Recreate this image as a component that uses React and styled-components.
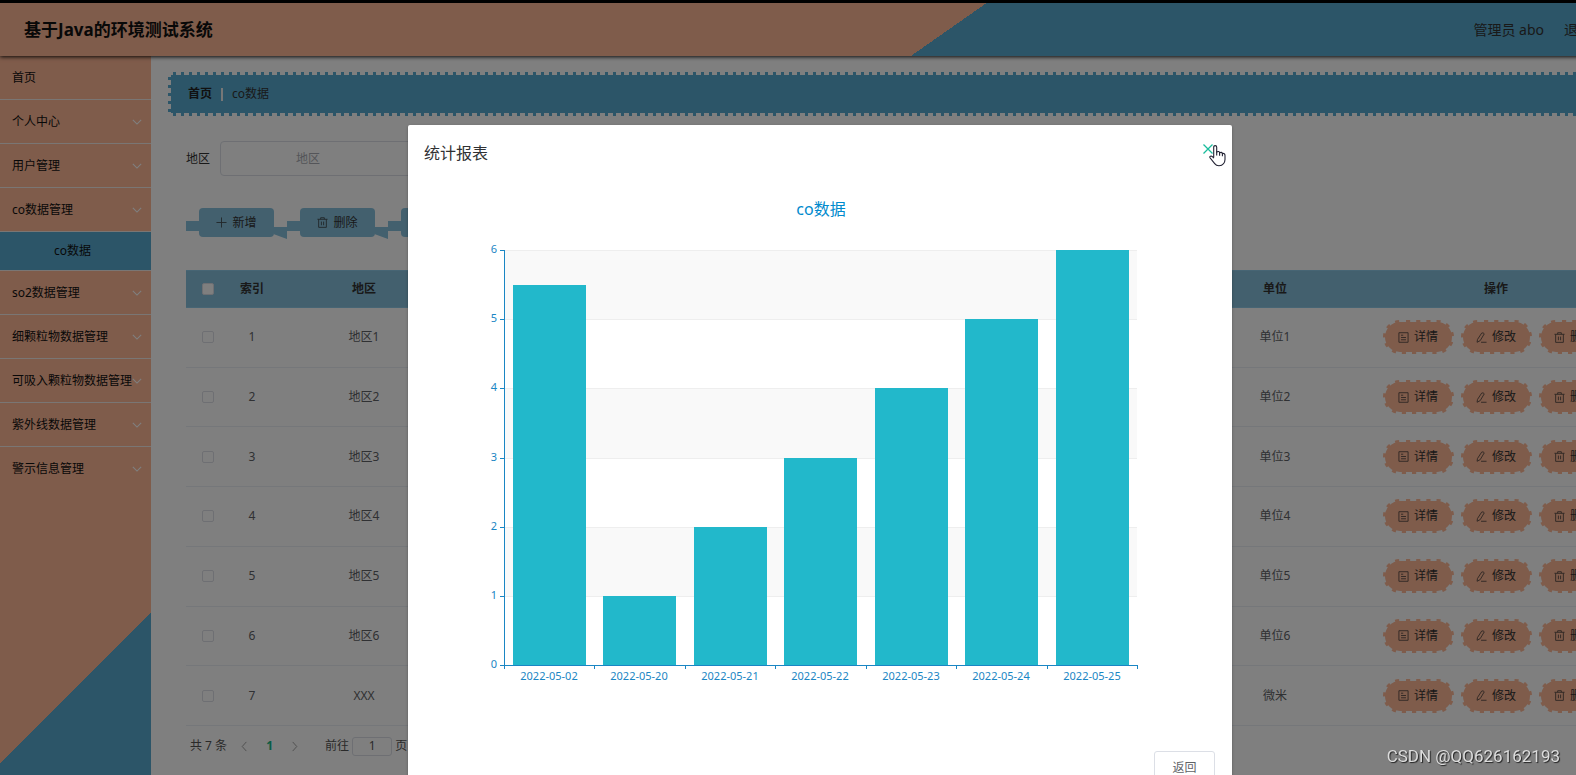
import React from "react";
import styled, { createGlobalStyle } from "styled-components";

const Global = createGlobalStyle`
  *, *::before, *::after { box-sizing: border-box; }
  html, body { margin: 0; padding: 0; }
  body {
    background: #fff;
    color: #333;
    font-family: "Noto Sans", "Noto Sans CJK SC", sans-serif;
    font-size: 12px;
    line-height: 20px;
    overflow: hidden;
  }
  button, input { font: inherit; color: inherit; }
`;

const SALMON = "#ffb896";
const BLUE = "#58aad0";
const PALE_BLUE = "#86c0dc";

const Shell = styled.div`
  position: relative;
  display: flex;
  flex-direction: column;
  width: calc(100% + 64px);
  height: 100vh;
  overflow: hidden;
  border-top: 3px solid #000;
`;

const Header = styled.header`
  position: relative;
  z-index: 1;
  flex: none;
  display: flex;
  align-items: center;
  justify-content: space-between;
  height: 53px;
  padding: 0 20px 0 24px;
  background: linear-gradient(145deg, ${SALMON} 57.5%, ${BLUE} 57.5%);
  box-shadow: 0 1px 4px rgba(0, 0, 0, 0.9);
`;

const SystemName = styled.h1`
  margin: 0;
  color: #111;
  font-size: 17px;
  font-weight: 700;
  line-height: 24px;
`;

const UserArea = styled.div`
  display: flex;
  gap: 20px;
  font-size: 14px;
`;

const HeaderLink = styled.a`
  color: inherit;
  text-decoration: none;
`;

const Body = styled.div`
  flex: 1;
  display: flex;
  min-height: 0;
`;

const Sidebar = styled.nav`
  flex: none;
  width: 151px;
  background: linear-gradient(-45deg, ${BLUE} 115px, ${SALMON} 115px);
`;

const MenuList = styled.ul`
  margin: 0;
  padding: 0;
  list-style: none;
`;

const MenuItem = styled.li`
  border-bottom: 1px solid #f4ece8;
  &:last-child { border-bottom: 0; }
`;

const MenuLink = styled.a`
  display: flex;
  align-items: center;
  justify-content: space-between;
  height: 43px;
  padding: 0 9px 0 12px;
  color: #111;
  text-decoration: none;
  white-space: nowrap;
  svg { flex: none; margin-left: -8px; color: #fff; }
`;

const SubLink = styled.a`
  display: block;
  height: 39px;
  padding-left: 54px;
  border-top: 1px solid #f4ece8;
  background: ${BLUE};
  color: #111;
  line-height: 38px;
  text-decoration: none;
`;

const Main = styled.main`
  flex: 1;
  min-width: 0;
  padding: 16px 17px;
`;

const tooth = (angle) =>
  `repeating-linear-gradient(${angle}, transparent 0 5px, ${BLUE} 5px 8px)`;

const Crumbs = styled.nav`
  display: flex;
  align-items: center;
  gap: 9px;
  height: 44px;
  padding: 0 17px;
  border: 3px solid transparent;
  background:
    linear-gradient(${BLUE}, ${BLUE}) padding-box,
    ${tooth("90deg")} 0 0 / 100% 3px no-repeat border-box,
    ${tooth("90deg")} 0 100% / 100% 3px no-repeat border-box,
    ${tooth("180deg")} 0 0 / 3px 100% no-repeat border-box;
`;

const CrumbLink = styled.a`
  color: #222;
  font-weight: 600;
  text-decoration: none;
`;

const CrumbBar = styled.span`
  width: 2px;
  height: 13px;
  background: #eee;
`;

const Content = styled.section`
  padding: 25px 8px 0 18px;
`;

const SearchForm = styled.form`
  display: flex;
  align-items: center;
  gap: 10px;
  height: 35px;
`;

const SearchInput = styled.input`
  width: 206px;
  height: 35px;
  padding: 0 30px 0 0;
  border: 1px solid #dcdfe6;
  border-radius: 4px;
  background: transparent;
  text-align: center;
  &::placeholder { color: #a8abb2; }
`;

const ToolRow = styled.div`
  display: flex;
  gap: 26px;
  margin: 32px 0 33px;
  padding-left: 13px;
`;

const RibbonButton = styled.button`
  position: relative;
  display: flex;
  align-items: center;
  justify-content: center;
  gap: 5px;
  width: 75px;
  height: 29px;
  padding: 0;
  border: 0;
  border-radius: 4px;
  background: ${PALE_BLUE};
  svg { opacity: 0.8; }
  &::before, &::after {
    content: "";
    position: absolute;
    background: ${PALE_BLUE};
  }
  &::before { left: -13px; top: 13px; width: 13px; height: 10px; }
  &::after {
    left: 75px;
    top: 19px;
    width: 13px;
    height: 12px;
    clip-path: polygon(0 0, 100% 0, 100% 100%, 0 60%);
  }
`;

const DataTable = styled.table`
  width: 100%;
  height: 456px;
  border-collapse: separate;
  border-spacing: 0;
  table-layout: fixed;
  text-align: center;
`;

const Col = styled.col`
  width: ${(p) => p.$w || "auto"};
`;

const Th = styled.th`
  height: 38px;
  padding: 0;
  border-top: 1px solid #8fcbe8;
  border-bottom: 1px solid #8fcbe8;
  background: ${PALE_BLUE};
  font-weight: 600;
`;

const Td = styled.td`
  padding: 0;
  border-bottom: 1px solid #ebeef5;
  color: #606266;
`;

const Check = styled.input`
  appearance: none;
  display: block;
  width: 12px;
  height: 12px;
  margin: 0 auto;
  border: 1px solid #dcdfe6;
  border-radius: 2px;
  background: #fff;
`;

const Actions = styled.div`
  display: flex;
  justify-content: center;
  gap: 7px;
`;

const ActionButton = styled.button`
  display: flex;
  align-items: center;
  justify-content: center;
  gap: 5px;
  width: 71px;
  height: 34px;
  padding: 0;
  border: 2px dashed #fff;
  border-radius: 20px;
  background: ${SALMON};
  color: #333;
  svg { opacity: 0.8; }
`;

const Pager = styled.nav`
  display: flex;
  align-items: center;
  height: 20px;
  margin-top: 10px;
  padding-left: 4px;
  color: #555;
`;

const PagerNumbers = styled.div`
  display: flex;
  margin: 0 18px 0 5px;
`;

const PagerButton = styled.button`
  display: flex;
  align-items: center;
  justify-content: center;
  width: 25px;
  height: 20px;
  padding: 0;
  border: 0;
  background: none;
  color: ${(p) => (p.$on ? "#12b886" : "#999")};
  font-weight: ${(p) => (p.$on ? 700 : 400)};
`;

const JumpLabel = styled.label`
  display: flex;
  align-items: center;
  gap: 3px;
`;

const JumpInput = styled.input`
  width: 40px;
  height: 19px;
  padding: 0;
  border: 1px solid #dcdfe6;
  border-radius: 3px;
  background: transparent;
  text-align: center;
`;

const Overlay = styled.div`
  position: absolute;
  inset: 0;
  z-index: 2;
  display: flex;
  justify-content: center;
  align-items: flex-start;
  padding-top: 122px;
  background: rgba(0, 0, 0, 0.5);
`;

const Dialog = styled.section`
  width: 824px;
  border-radius: 2px;
  background: #fff;
  box-shadow: 0 1px 3px rgba(0, 0, 0, 0.3);
`;

const DialogHead = styled.div`
  position: relative;
  display: flex;
  justify-content: space-between;
  align-items: flex-start;
  height: 56px;
  padding: 16px;
`;

const DialogTitle = styled.h2`
  margin: 0;
  color: #303133;
  font-size: 16px;
  font-weight: 400;
  line-height: 24px;
`;

const CloseButton = styled.button`
  display: flex;
  align-items: center;
  justify-content: center;
  width: 16px;
  height: 16px;
  padding: 0;
  border: 0;
  background: none;
  color: #1abc9c;
`;

const Pointer = styled.svg`
  position: absolute;
  top: 20px;
  right: 6px;
`;

const ChartBox = styled.div`
  padding: 0 16px;
  svg { display: block; width: 100%; height: auto; }
`;

const DialogFoot = styled.div`
  display: flex;
  justify-content: flex-end;
  padding: 16px 17px;
`;

const BackButton = styled.button`
  width: 61px;
  height: 34px;
  padding: 0;
  border: 1px solid #dcdfe6;
  border-radius: 3px;
  background: #fff;
  color: #606266;
`;

const Watermark = styled.div`
  position: fixed;
  right: 16px;
  bottom: 7px;
  z-index: 3;
  color: #dcdcdc;
  font-family: Roboto, sans-serif;
  font-size: 17px;
  line-height: 24px;
  text-shadow: 1px 1px 1px #222;
`;

const Icon = ({ size = 11, children }) => (
  <svg width={size} height={size} viewBox="0 0 12 12" fill="none" stroke="currentColor" strokeWidth="1" aria-hidden="true">
    {children}
  </svg>
);

const Chevron = () => <Icon size={10}><path d="M1 3.5 6 8.5 11 3.5" strokeWidth="1.3" /></Icon>;
const PlusIcon = () => <Icon><path d="M6 .5v11M.5 6h11" /></Icon>;
const TrashIcon = () => (
  <Icon><path d="M.5 2.5h11M4 2.5V.8h4v1.7M1.8 2.5v8.8h8.4V2.5M4.8 5v4M7.2 5v4" /></Icon>
);
const DetailIcon = () => (
  <Icon><path d="M1 .8h10v10.4H1zM3.3 3.5h2.4M3.3 6h5.4M3.3 8.5h5.4" /></Icon>
);
const EditIcon = () => (
  <Icon><path d="M6.2 1.2Q7.8.2 9 2L4.6 9.4 1.2 11.2 1.6 8.2zM5.5 11.2h6" /></Icon>
);
const PrevIcon = () => <Icon><path d="M8 1 3.5 6 8 11" /></Icon>;
const NextIcon = () => <Icon><path d="M4 1 8.5 6 4 11" /></Icon>;
const CloseIcon = () => <Icon size={12}><path d="M1.5 1.5l9 9M10.5 1.5l-9 9" strokeWidth="1.3" /></Icon>;

const HandPointer = () => (
  <Pointer width="17" height="22" viewBox="0 0 17 22" aria-hidden="true">
    <path
      d="M4.7 12.5V2.2Q4.7.6 6.2.6 7.7.6 7.7 2.2V7Q10.2 5.8 10.6 7.7 12.8 6.7 13.4 8.5 15.9 8 16 10.4V14.5Q16 17 14.4 18.8 13 20.8 10 20.8 7.2 20.8 5.7 18.6L1 12.8Q.3 11 2.2 11 3.4 11.3 4.7 13.2"
      fill="#fff" stroke="#222233" strokeWidth="1.1"
    />
    <path d="M7.7 6.5V10.5M10.6 7.5V10.8M13.4 8.3V11.2" fill="none" stroke="#222233" strokeWidth="1.1" />
  </Pointer>
);

const menu = [
  { text: "首页", leaf: true },
  { text: "个人中心" },
  { text: "用户管理" },
  { text: "co数据管理", child: "co数据" },
  { text: "so2数据管理" },
  { text: "细颗粒物数据管理" },
  { text: "可吸入颗粒物数据管理" },
  { text: "紫外线数据管理" },
  { text: "警示信息管理" },
];

const rows = [
  ["地区1", "单位1"],
  ["地区2", "单位2"],
  ["地区3", "单位3"],
  ["地区4", "单位4"],
  ["地区5", "单位5"],
  ["地区6", "单位6"],
  ["XXX", "微米"],
];

const readings = [
  ["2022-05-02", 5.5],
  ["2022-05-20", 1],
  ["2022-05-21", 2],
  ["2022-05-22", 3],
  ["2022-05-23", 4],
  ["2022-05-24", 5],
  ["2022-05-25", 6],
];

const PLOT = { left: 80, right: 713, top: 69, bottom: 484, max: 6 };
const AXIS = "#1a86c4";

function BarChart() {
  const step = (PLOT.right - PLOT.left) / readings.length;
  const yOf = (v) => Math.round(PLOT.bottom - ((PLOT.bottom - PLOT.top) * v) / PLOT.max);
  const xOf = (i) => Math.round(PLOT.left + step * i);
  const ticks = [0, 1, 2, 3, 4, 5, 6];
  return (
    <svg viewBox="0 0 792 554" role="img" aria-label="co数据">
      <text x="397" y="34" textAnchor="middle" fontSize="16" fill="#008acd">co数据</text>
      {[2, 4, 6].map((v) => (
        <rect key={v} x={PLOT.left} y={yOf(v)} width={PLOT.right - PLOT.left} height={yOf(v - 1) - yOf(v)} fill="#f9f9f9" />
      ))}
      {ticks.slice(1).map((v) => (
        <path key={v} d={`M${PLOT.left} ${yOf(v) + 0.5}H${PLOT.right}`} stroke="#eee" />
      ))}
      {readings.map(([day, v], i) => (
        <rect key={day} x={xOf(i) + 9} y={yOf(v)} width="73" height={PLOT.bottom - yOf(v)} fill="#22b8cb" />
      ))}
      <g stroke={AXIS} fill="none">
        <path d={`M${PLOT.left + 0.5} ${PLOT.top}V${PLOT.bottom + 1}M${PLOT.left} ${PLOT.bottom + 0.5}H${PLOT.right + 1}`} />
        {ticks.map((v) => <path key={v} d={`M${PLOT.left - 4} ${yOf(v) + 0.5}h5`} />)}
        {[...readings, null].map((_, i) => <path key={i} d={`M${xOf(i) + 0.5} ${PLOT.bottom}v4`} />)}
      </g>
      <g fontSize="11" fill={AXIS}>
        {ticks.map((v) => <text key={v} x={PLOT.left - 7} y={yOf(v) + 3} textAnchor="end">{v}</text>)}
        {readings.map(([day], i) => (
          <text key={day} x={xOf(i) + 45} y={PLOT.bottom + 15} textAnchor="middle">{day}</text>
        ))}
      </g>
    </svg>
  );
}

export default function App() {
  return (
    <>
      <Global />
      <Shell>
        <Header>
          <SystemName>基于Java的环境测试系统</SystemName>
          <UserArea>
            <span>管理员 abo</span>
            <HeaderLink href="#logout">退出登录</HeaderLink>
          </UserArea>
        </Header>
        <Body>
          <Sidebar aria-label="菜单">
            <MenuList>
              {menu.map((m) => (
                <MenuItem key={m.text}>
                  <MenuLink href="#menu">{m.text}{!m.leaf && <Chevron />}</MenuLink>
                  {m.child && <SubLink href="#co">{m.child}</SubLink>}
                </MenuItem>
              ))}
            </MenuList>
          </Sidebar>
          <Main>
            <Crumbs aria-label="首页">
              <CrumbLink href="#home">首页</CrumbLink>
              <CrumbBar />
              <span>co数据</span>
            </Crumbs>
            <Content>
              <SearchForm>
                <label htmlFor="area">地区</label>
                <SearchInput id="area" placeholder="地区" />
              </SearchForm>
              <ToolRow>
                <RibbonButton type="button"><PlusIcon />新增</RibbonButton>
                <RibbonButton type="button"><TrashIcon />删除</RibbonButton>
                <RibbonButton type="button" aria-label="统计报表" />
              </ToolRow>
              <DataTable>
                <colgroup>
                  <Col $w="44px" /><Col $w="44px" /><Col $w="180px" /><Col /><Col $w="204px" /><Col $w="238px" />
                </colgroup>
                <thead>
                  <tr>
                    <Th><Check type="checkbox" aria-label="全选" /></Th>
                    <Th>索引</Th>
                    <Th>地区</Th>
                    <Th />
                    <Th>单位</Th>
                    <Th>操作</Th>
                  </tr>
                </thead>
                <tbody>
                  {rows.map(([area, unit], i) => (
                    <tr key={area}>
                      <Td><Check type="checkbox" aria-label={area} /></Td>
                      <Td>{i + 1}</Td>
                      <Td>{area}</Td>
                      <Td />
                      <Td>{unit}</Td>
                      <Td>
                        <Actions>
                          <ActionButton type="button"><DetailIcon />详情</ActionButton>
                          <ActionButton type="button"><EditIcon />修改</ActionButton>
                          <ActionButton type="button"><TrashIcon />删除</ActionButton>
                        </Actions>
                      </Td>
                    </tr>
                  ))}
                </tbody>
              </DataTable>
              <Pager aria-label="分页">
                <span>共 7 条</span>
                <PagerNumbers>
                  <PagerButton type="button" aria-label="上一页"><PrevIcon /></PagerButton>
                  <PagerButton type="button" $on>1</PagerButton>
                  <PagerButton type="button" aria-label="下一页"><NextIcon /></PagerButton>
                </PagerNumbers>
                <JumpLabel>前往<JumpInput defaultValue="1" />页</JumpLabel>
              </Pager>
            </Content>
          </Main>
        </Body>
        <Overlay>
          <Dialog role="dialog" aria-label="统计报表">
            <DialogHead>
              <DialogTitle>统计报表</DialogTitle>
              <CloseButton type="button" aria-label="关闭"><CloseIcon /></CloseButton>
              <HandPointer />
            </DialogHead>
            <ChartBox><BarChart /></ChartBox>
            <DialogFoot><BackButton type="button">返回</BackButton></DialogFoot>
          </Dialog>
        </Overlay>
      </Shell>
      <Watermark>CSDN @QQ626162193</Watermark>
    </>
  );
}
